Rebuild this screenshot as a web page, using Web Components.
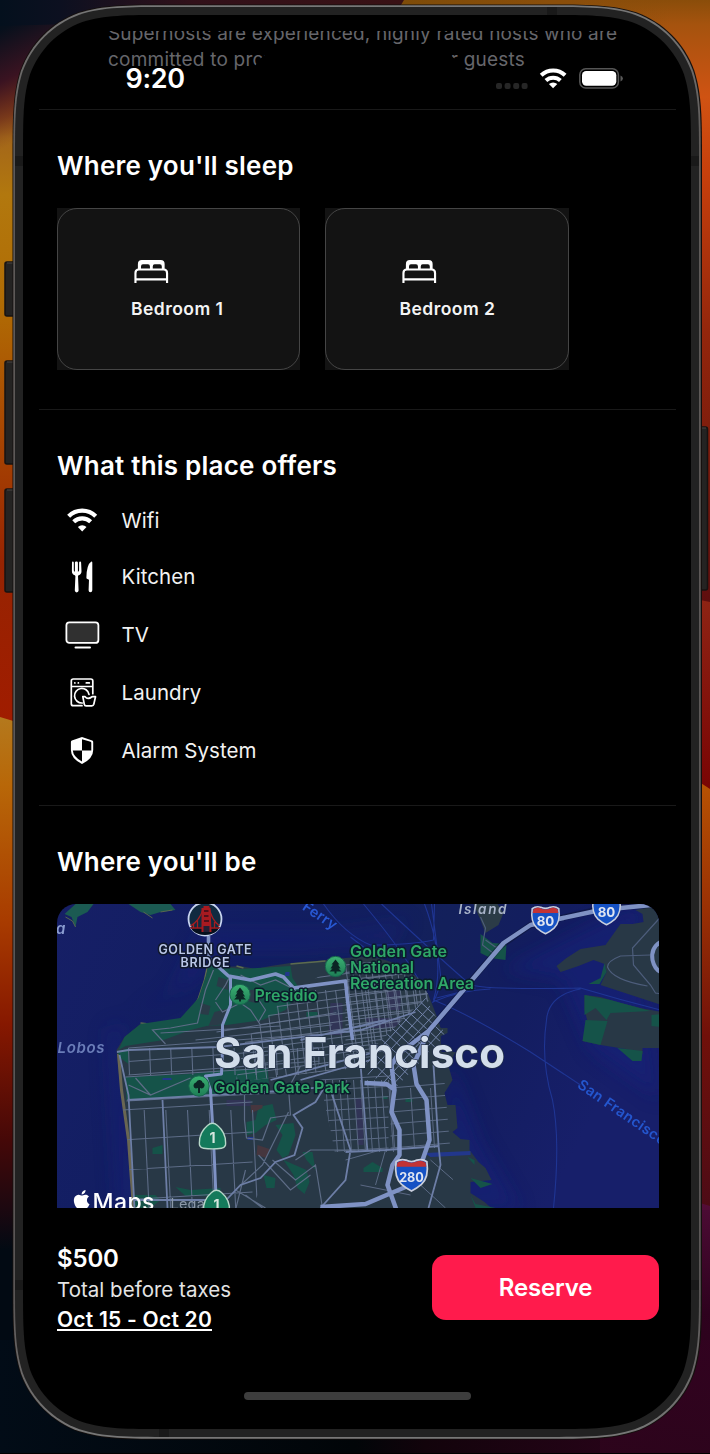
<!DOCTYPE html>
<html lang="en">
<head>
<meta charset="utf-8">
<title>Stay details</title>
<style>
html,body{margin:0;background:#000}
body{width:710px;height:1454px;overflow:hidden;font-family:Inter,"Liberation Sans",sans-serif;color:#fff}
</style>
</head>
<body>
<stay-page></stay-page>
<script>
const define = (name, html) => customElements.define(name, class extends HTMLElement {
  constructor() {
    super();
    const root = this.attachShadow({ mode: 'open' });
    const t = document.createElement('template');
    t.innerHTML = typeof html === 'function' ? html(this) : html;
    root.append(t.content.cloneNode(true));
  }
});

/* Rounded rectangle with continuous corners. */
function smoothRect(x, y, w, h, r) {
  const a = 1.52866 * r, b = 1.08849 * r, c = .86841 * r, d = .63149 * r, e = .07491 * r, f = .37282 * r, g = .16906 * r;
  const R = x + w, B = y + h;
  return `M${x+a} ${y}H${R-a}C${R-b} ${y} ${R-c} ${y} ${R-d} ${y+e}C${R-f} ${y+g} ${R-g} ${y+f} ${R-e} ${y+d}C${R} ${y+c} ${R} ${y+b} ${R} ${y+a}V${B-a}C${R} ${B-b} ${R} ${B-c} ${R-e} ${B-d}C${R-g} ${B-f} ${R-f} ${B-g} ${R-d} ${B-e}C${R-c} ${B} ${R-b} ${B} ${R-a} ${B}H${x+a}C${x+b} ${B} ${x+c} ${B} ${x+d} ${B-e}C${x+f} ${B-g} ${x+g} ${B-f} ${x+e} ${B-d}C${x} ${B-c} ${x} ${B-b} ${x} ${B-a}V${y+a}C${x} ${y+b} ${x} ${y+c} ${x+e} ${y+d}C${x+g} ${y+f} ${x+f} ${y+g} ${x+d} ${y+e}C${x+c} ${y} ${x+b} ${y} ${x+a} ${y}Z`;
}

define('device-frame', `
<style>
:host{display:block;position:relative;width:710px;height:1454px;box-sizing:border-box;padding:15px 19px 25px 23px}
svg{position:absolute;inset:0}
main{position:relative;display:flex;flex-direction:column;width:668px;height:1414px}
</style>
<svg width="710" height="1454" viewBox="0 0 710 1454">
<defs>
<linearGradient id="l1" x2="0" y2="1"><stop offset="0" stop-color="#04101d"/><stop offset=".06" stop-color="#0a1020"/><stop offset=".1" stop-color="#431526"/><stop offset=".135" stop-color="#75321a"/><stop offset=".19" stop-color="#a3661a"/><stop offset=".27" stop-color="#b2780e"/><stop offset=".42" stop-color="#b06c04"/><stop offset=".58" stop-color="#a94a02"/><stop offset=".78" stop-color="#972402"/><stop offset="1" stop-color="#a01c00"/></linearGradient>
<linearGradient id="l2" x2="0" y2="1"><stop offset="0" stop-color="#b4791d"/><stop offset=".1" stop-color="#b86708"/><stop offset=".3" stop-color="#a83b00"/><stop offset=".45" stop-color="#861800"/><stop offset=".62" stop-color="#450808"/><stop offset=".72" stop-color="#1c0810"/><stop offset=".78" stop-color="#020a13"/><stop offset="1" stop-color="#020a13"/></linearGradient>
<linearGradient id="r1" x2="0" y2="1"><stop offset="0" stop-color="#8a4d0a"/><stop offset=".04" stop-color="#a5530e"/><stop offset=".16" stop-color="#cf5313"/><stop offset=".28" stop-color="#c8400c"/><stop offset=".55" stop-color="#93260c"/><stop offset="1" stop-color="#5e0e0e"/></linearGradient>
<linearGradient id="r2" x2="0" y2="1"><stop offset="0" stop-color="#8e2414"/><stop offset="1" stop-color="#780303"/></linearGradient>
<linearGradient id="r3" x2="0" y2="1"><stop offset="0" stop-color="#b85403"/><stop offset=".3" stop-color="#9a3104"/><stop offset=".6" stop-color="#70100a"/><stop offset="1" stop-color="#4c0b16"/></linearGradient>
<linearGradient id="r4" x2="0" y2="1"><stop offset="0" stop-color="#560d3b"/><stop offset=".45" stop-color="#330221"/><stop offset="1" stop-color="#2d041c"/></linearGradient>
<linearGradient id="t" ><stop offset="0" stop-color="#04101d"/><stop offset=".14" stop-color="#0c1020"/><stop offset=".45" stop-color="#32111a"/><stop offset="1" stop-color="#3a1114"/></linearGradient>
<linearGradient id="tr"><stop offset="0" stop-color="#7c4b08"/><stop offset=".6" stop-color="#8a4e0a"/><stop offset="1" stop-color="#8a4e0a" stop-opacity="0"/></linearGradient>
<linearGradient id="b"><stop offset="0" stop-color="#020c17"/><stop offset=".5" stop-color="#010508"/><stop offset=".6" stop-color="#12030b"/><stop offset="1" stop-color="#30041e"/></linearGradient>
<linearGradient id="tl" gradientUnits="userSpaceOnUse" x1="0" y1="0" x2="60" y2="120"><stop offset="0" stop-color="#03101c"/><stop offset=".2" stop-color="#07101c"/><stop offset=".55" stop-color="#3a1321"/><stop offset=".8" stop-color="#6b2c1b" stop-opacity=".6"/><stop offset="1" stop-color="#8a4a1a" stop-opacity="0"/></linearGradient>
<linearGradient id="rim" x2="0" y2="1"><stop offset="0" stop-color="#777"/><stop offset=".1" stop-color="#5e5a58"/><stop offset=".9" stop-color="#5a5656"/><stop offset="1" stop-color="#777"/></linearGradient>
</defs>
<path fill="#000" d="M0 0H710V1454H0Z"/>
<path fill="url(#l1)" d="M0 0H355V722H0Z"/>
<path fill="url(#r1)" d="M355 0H710V605H355Z"/>
<path fill="url(#tl)" d="M0 0H130V150H0Z"/>
<path fill="url(#t)" d="M0 0H430C410 10 395 16 380 24H70L0 26Z"/>
<path fill="url(#tr)" d="M404 0H670V40H380Z"/>
<path fill="url(#l2)" d="M0 717L20 723V1400H0Z"/>
<path fill="url(#r2)" d="M690 598L710 602V800H690Z"/>
<path fill="url(#r3)" d="M690 776L710 789V1210H690Z"/>
<path fill="url(#b)" d="M0 1340H710V1454H0Z"/>
<path fill="url(#r4)" d="M600 1340L690 1200L710 1206V1454H600Z" opacity=".9"/>
<path d="M0 1453.500H710" stroke="#000"/>
<g fill="#242322" stroke="#171312" stroke-width="1.500"><rect x="5" y="262" width="14" height="54" rx="2"/><rect x="5" y="361" width="14" height="103" rx="2"/><rect x="5" y="489" width="14" height="103" rx="2"/><rect x="695" y="427" width="12.500" height="163" rx="2"/></g>
<path d="M7 263H14M7 362H14M7 490H14M700 428H706" stroke="#4b4744"/>
<path fill="#15100e" d="${smoothRect(12.500, 4.500, 689.500, 1435, 104)}"/>
<path fill="url(#rim)" d="${smoothRect(13.300, 5.200, 687.500, 1433.600, 103.500)}"/>
<path fill="#222" d="${smoothRect(15, 7, 684, 1430, 102)}"/>
<path fill="#191919" d="M15 156H23V166H15ZM691 156H699V166H691ZM15 1280H23V1290H15ZM691 1280H699V1290H691ZM547 7H557V15H547ZM159 1429H169V1437H159Z"/>
<path d="${smoothRect(23, 15, 668, 1414, 94)}"/>
</svg>
<main><slot></slot></main>`);

define('status-area', `
<style>
:host{display:block;position:relative;height:94px;flex:none}
.clip{margin:16px 0 0 85px;height:58px;overflow:hidden}
p{margin:-10px 0 0;font-size:19px;line-height:26px;color:#66666b;white-space:nowrap;letter-spacing:.14px}
#two{letter-spacing:.22px}
.island{position:absolute;left:229px;top:35px;width:211px;height:58px;border-radius:30px;background:#000}
.bar{position:absolute;left:102.500px;top:50px;right:68px;display:flex;align-items:center;height:28px}
b{font-weight:600;font-size:27px;line-height:28px;letter-spacing:-.35px}
svg{margin-left:auto}
</style>
<div class="clip"><p><span>Superhosts are experienced, highly rated hosts who are</span><br><span id="two">committed to providing great stays for guests</span></p></div>
<div class="island"></div>
<div class="bar"><b>9:20</b>
<svg width="128" height="26" viewBox="495 66 128 26">
<g fill="#262626"><rect x="496" y="83" width="6" height="6" rx="2"/><rect x="504.600" y="83" width="6" height="6" rx="2"/><rect x="513.200" y="83" width="6" height="6" rx="2"/><rect x="521.600" y="83" width="6" height="6" rx="2"/></g>
<g fill="none" stroke="#fff" stroke-width="4"><path d="M541.200 75.300a17.300 17.300 0 0 1 23.900 0"/><path d="M545.900 80.500a10.600 10.600 0 0 1 14.500 0"/></g><path fill="#fff" d="M553.100 88.300l-4.200-4.200a6.300 6.300 0 0 1 8.400 0z"/>
<rect x="579.800" y="68.800" width="38.600" height="19.200" rx="6" fill="none" stroke="#555" stroke-width="1.500"/><rect x="582" y="71" width="34.300" height="14.800" rx="4.200" fill="#fff"/><path fill="#5a5a5a" d="M620.500 75.500q2.400 1 2.400 3t-2.400 3z"/>
</svg></div>`);

define('rule-line', `<style>:host{display:block;height:1px;flex:none;margin:0 15px 0 16px;background:#191919}</style>`);

define('page-section', `
<style>
:host{display:block;flex:none;box-sizing:border-box;padding:0 32px 0 34px}
h2{margin:0;font-size:26px;line-height:32px;font-weight:600;letter-spacing:.22px;white-space:nowrap}
</style><h2><slot name="title"></slot></h2><slot></slot>`);

define('card-row', `<style>:host{display:flex;gap:25px;margin:26px 0 0 -.5px}</style><slot></slot>`);

define('bedroom-card', `
<style>
:host{display:block;width:243.500px;height:162px;background:#131313}
.box{box-sizing:border-box;height:100%;border:1px solid #454545;border-radius:20px;display:flex;flex-direction:column;padding:51px 0 0 73.500px;gap:14px}
svg{display:block;margin-left:2.500px}
span{font-weight:600;font-size:17.500px;line-height:22px;letter-spacing:.45px;color:#f4f4f4;white-space:nowrap}
</style>
<div class="box"><svg width="35" height="24" viewBox="0 0 36 24" preserveAspectRatio="none"><path fill="#fff" fill-rule="evenodd" d="M4 9V4q0-4 4-4h19.500q4 0 4 4v5H28.600V6.500q0-2.300-2-2.300h-5.300q-2 0-2 2.300V9H16.400V6.500q0-2.300-2-2.300H9.200q-2 0-2 2.300V9Z"/><path fill="none" stroke="#fff" stroke-width="2.200" d="M1.500 23V13q0-3.500 3.500-3.500H30.500q3.500 0 3.500 3.500V23M1.500 19.300H34"/></svg>
<span><slot></slot></span></div>`);

const ICONS = {
  wifi: '<g transform="translate(1.200 2.800) scale(.94)"><g fill="none" stroke="#fff" stroke-width="4.500"><path d="M2.600 11a20.500 20.500 0 0 1 28.800 0"/><path d="M8 17a13 13 0 0 1 18 0"/></g><path fill="#fff" d="M17 27.300l-4.600-4.700a6.700 6.700 0 0 1 9.200 0z"/></g>',
  kitchen: '<path fill="#fff" transform="translate(0 -.7)" d="M7.800 2.300q.9 0 1 1V11q.1 1.300 1.100 1.400V3.300q.1-1 1.200-1h.7q1 0 1.100 1v9.100q1.100-.1 1.200-1.400V3.300q.1-1 1-1t1 1l.4 8.700q0 3-2.900 4l-.6.700.6 14.600q-.1 1.800-1.900 1.800t-1.900-1.800l.6-14.600-.6-.7q-2.900-1-2.900-4l.1-8.700q0-1 .8-1zM26.300 2.300q1 0 1 1V31q-.1 2-1.900 2t-1.800-2L24 20.500l-2.100-1.100q-.6-.3-.5-1.200Q21.600 5.500 26.300 2.300z"/>',
  tv: '<g transform="translate(0 -.6)"><rect x="1.400" y="4.900" width="32" height="20.600" rx="3" fill="#303030" stroke="#fff" stroke-width="1.800"/><path d="M10.500 30H25" stroke="#fff" stroke-width="2" stroke-linecap="round"/></g>',
  laundry: '<g transform="translate(0 -.8)" fill="none" stroke="#fff" stroke-width="1.700" stroke-linejoin="round" stroke-linecap="round"><path d="M17 30.500H8.300q-2 0-2-2V5.800q0-2 2-2h17.500q2 0 2 2V18.500M6.500 11.300H27.500"/><path d="M24 19.200a7.300 7.300 0 1 0-6.800 8.600"/><path d="M17.800 21.500h2.300q2.500 3.300 7 0h3.400l-1.700 7.600q-.4 1.500-2 1.500h-5.700q-1.500 0-1.800-1.500z"/><path d="M9.800 7.700h.1M13.300 7.700h.1M21.300 7.700h3"/></g>',
  alarm: '<path fill="#fff" fill-rule="evenodd" transform="translate(-.3 -.6)" d="M17.300 3.500 27.500 7q1 .4 1 1.500v8q0 8.500-11.200 14Q6.200 25 6.200 16.500v-8q0-1.100 1-1.500ZM17.300 5.800V17.100H26.600V9.300q0-.7-.7-1ZM17.300 17.100H8.100Q8.600 23.300 17.300 28.200Z"/>'
};
define('amenity-row', el => `
<style>
:host{display:flex;align-items:center;height:58px;gap:21.500px;padding-left:8px}
svg{display:block;flex:none}
span{font-size:20.500px;line-height:28px;letter-spacing:.06px;font-weight:400;color:#f2f2f2;white-space:nowrap}
:host([icon=wifi]) span{padding-top:2px}
</style>
<svg width="35" height="35" viewBox="0 0 35 35">${ICONS[el.getAttribute('icon')]}</svg><span><slot></slot></span>`);

/* Evenly spaced parallel streets between two edges. */
function streets(x, y, w, h, nx, ny, dx, dy) {
  let d = '';
  for (let i = 0; i <= nx; i++) { const p = x + w * i / nx; d += `M${p.toFixed(1)} ${y}l${dx} ${h}`; }
  for (let i = 0; i <= ny; i++) { const p = y + h * i / ny; d += `M${x} ${p.toFixed(1)}l${w} ${dy}`; }
  return d;
}
const SF = 'M209 958L225 967L240 966L255 969L270 966L290 963L315 961L345 958L370 956L388 961L405 968L420 980L428 995L437 1018L440 1028H447V1033L440 1036L441 1052H455L448 1066L452 1080L444 1093L447 1105H455L457 1128L452 1132L460 1139L469 1140V1150L478 1162L485 1168L491 1180L470 1182L470 1193L484 1202L493 1210H132L127 1140L120 1090L116 1050L124 1037L140 1024L152 1023L163 1026L180 1018L190 1013L198 998L206 974Z';
const EAST = 'M661 905L635 910L642 914L643 922L632 924L620 924L605 945L580 949L566 958L556 966L560 972L578 966L593 960L604 964L606 972L600 985L661 1005Z';
const ALA = 'M584 995L600 997L620 1003L640 1008L661 1012V1048H642V1054L625 1049L600 1045L582 1041L588 1025L584 1010Z';
const shield = (x, y, n, s = 1) => `<g transform="translate(${x} ${y}) scale(${s})"><path fill="#1551c4" stroke="#c9cfdd" stroke-width="1.600" d="M-14-12Q-10-15-5-13.500Q0-11 5-13.500Q10-15 14-12Q16 2 9 8.500Q5 12 0 14.500Q-5 12-9 8.500Q-16 2-14-12Z"/><path fill="#c23335" d="M-12.800-11.400Q-9-14-5-12.500Q0-10 5-12.500Q9-14 12.800-11.400L13.500-7.500H-13.500Z"/><text y="6" text-anchor="middle" font-size="${n > 99 ? 11.500 : 14}" font-weight="700" fill="#dfe5f1">${n}</text></g>`;
const rt1 = (x, y) => `<g transform="translate(${x} ${y})"><path fill="#147a5b" stroke="#b7d8c9" stroke-width="1.400" d="M-13 9Q-14-3-5-10.500Q0-15 5-10.500Q14-3 13 9Q12 12 9 12.300Q0 13.500-9 12.300Q-12 12-13 9Z"/><text y="6.500" text-anchor="middle" font-size="14" font-weight="700" fill="#d7e7df">1</text></g>`;
const pin = (x, y, round) => `<g transform="translate(${x} ${y})"><circle r="10.200" fill="url(#pin)" stroke="#17644d"/><path fill="#0b2524" d="${round ? 'M-1 7V2Q-5 3.500-5.500 0Q-5.500-3-3-3.500Q-2-6.500 1-6Q3.500-5.500 3.500-3.500Q6-2.500 5.500 0Q4.500 3.500 1 2V7Z' : 'M0-7L4-2H2.500L5 2H3L6 5H1V7H-1V5H-6L-3 2H-5L-2.500-2H-4Z'}"/></g>`;

define('location-map', `
<style>:host{display:block;margin:26px 0 0 -.5px;height:304px;width:602.500px;border-radius:19px 19px 0 0;overflow:hidden}svg{display:block}
text{font-family:Inter,"Liberation Sans",sans-serif}
.g{fill:#2fa768;font-size:16px;font-weight:600;paint-order:stroke;stroke:#0b1d2c;stroke-width:3px;stroke-linejoin:round}
.w{fill:#bac7e8;font-weight:600;paint-order:stroke;stroke:#10182c;stroke-width:3px;stroke-linejoin:round}
</style>
<svg width="602.500" height="304" viewBox="56.500 904 602.500 304">
<defs>
<linearGradient id="sea" x2="1" y2=".25"><stop offset="0" stop-color="#161f66"/><stop offset=".35" stop-color="#121e62"/><stop offset=".62" stop-color="#13205b"/><stop offset=".8" stop-color="#131d60"/><stop offset="1" stop-color="#171f6a"/></linearGradient>
<linearGradient id="pin" x2="0" y2="1"><stop offset="0" stop-color="#3cb172"/><stop offset="1" stop-color="#1d7d55"/></linearGradient>
<clipPath id="land"><path d="${SF}"/></clipPath>
<clipPath id="west"><path d="M110 1020L340 1000L300 1120L250 1208H110Z"/></clipPath>
<clipPath id="north"><path d="M245 1040L290 992L345 962H440L425 1010L372 1066L235 1082Z"/></clipPath>
<clipPath id="soma"><path d="M425 998L445 1035L395 1088L362 1072L376 1045Z"/></clipPath>
<clipPath id="mission"><path d="M318 1075L360 1066L444 1082L455 1208H345L330 1130Z"/></clipPath>
<filter id="soft"><feGaussianBlur stdDeviation="9"/></filter>
</defs>
<path fill="url(#sea)" d="M56 904H660V1208H56Z"/>
<g filter="url(#soft)" fill="#18207a" opacity=".55"><path d="M120 1020L200 980L215 950L300 950L390 945L410 920L340 930L200 930L170 990L105 1030L115 1208H145L125 1080Z" opacity=".75"/><path d="M450 1060L480 1140L520 1210H440ZM590 1050L560 980L500 970L560 940L640 900V960L660 1100Z"/></g>
<g fill="none" stroke="#1f3593" stroke-width="1.100"><path d="M350 937Q400 975 425 1000M363 904Q410 960 428 998M381 904Q430 950 470 985Q490 990 580 988Q620 1000 660 1010M424 904Q445 960 433 1000M431 904Q437 950 440 975Q440 990 432 1003M323 904Q345 935 370 945Q410 945 433 940L434 904M432 1002Q460 990 490 989M433 1000Q470 1015 530 1052L580 1085M580 989Q548 995 546 1020Q540 1060 552 1100Q560 1140 553 1208M436 998Q460 992 475 988"/></g>
<path fill="#1b5a52" d="M64 914L75 904H93L87 912L77 917L75 927L71 917ZM128 904H170L175 910L160 912L150 915L140 912Z"/><path fill="none" stroke="#58674f" d="M65 917L72 921L75 927M143 912L152 918M160 912L172 910"/>
<path fill="#283846" d="${SF}${EAST}${ALA}"/>
<path fill="none" stroke="#696653" stroke-width="3" d="M118 1054L121 1090L128 1140L133 1208"/>
<path fill="none" stroke="#5d6b50" stroke-width="1.500" d="M207 966L204 980L198 998L190 1014M165 1026L140 1023M236 966L243 968M290 964L325 961"/>
<g fill="#155349"><path d="M209 958L225 967L240 969L290 966L292 978L300 990L285 1010L262 1020L226 1025L206 1026L190 1030L163 1040L125 1046L118 1050L124 1037L140 1024L180 1018L198 998L206 974Z"/><path d="M117 1052L128 1048V1064L120 1058ZM125 1077L190 1074L220 1070L267 1068L269 1091L190 1096L126 1100Z"/><path d="M258 1107L272 1104L276 1120L265 1125L255 1133L246 1135V1122L255 1120ZM275 1125L293 1123L295 1135L288 1155L282 1158L276 1150L282 1135ZM283 1160L306 1170L309 1182L304 1194L297 1188L293 1175ZM302 1152L312 1152L315 1170L306 1160ZM263 1175L275 1178L274 1188L266 1188ZM175 1187L190 1190L220 1188V1196L185 1196ZM152 1148L162 1145L162 1154L152 1154ZM133 1195H155L160 1200L150 1208H135ZM363 1168L372 1162L382 1168L382 1172L363 1172Z"/><path d="M480 934L492 943L506 944L505 960L490 958L480 953ZM584 995L610 1000L650 1011L610 1013L606 1020L595 1008L584 1015ZM585 1020L607 1021L600 1045L582 1041ZM604 963L606 972L599 984L588 984L600 978ZM651 1015L661 1014V1027L651 1026ZM617 1048L642 1051L641 1061H632ZM467 1157L474 1160V1165ZM470 1178L492 1184L480 1188ZM470 1195L475 1204L495 1208H475ZM382 1096H387V1099H382ZM405 1098H412V1102H405ZM306 1012H317V1017H306ZM333 1010H341V1015H333Z"/></g>
<path fill="#2a3b48" d="M214 1012L226 1009L224 1024L208 1026ZM200 1003L210 1006L208 1015L200 1014ZM240 992L262 988L266 996L255 1003L240 999ZM218 977L228 980L228 990L216 986Z"/>
<path fill="#2b3b47" d="M473 904H497L503 913L498 925L485 933L480 920Z"/>
<path fill="#46363e" d="M257 1145L269 1149L266 1158L256 1155ZM250 1105H262V1108L251 1113Z"/>
<path fill="#33335a" opacity=".8" d="M226 1100H250V1106H226ZM330 1003H342V1035H328ZM355 1098H363V1145H357ZM365 1018H400V1028H368ZM385 985H400V1010H388Z"/>
<path fill="#22378c" d="M162 1078H171V1080H162ZM247 1137H253V1140H247ZM285 972H289V976H284ZM424 1153L470 1151V1155L430 1157Z"/>
<g clip-path="url(#land)" fill="none">
<g clip-path="url(#west)" stroke="#5d6c87" stroke-width="1.100"><path d="${streets(128, 1048, 190, 27, 9, 2, 1, -14)}${streets(122, 1110, 130, 120, 6, 4, 6, -8)}M126 1101L330 1090M125 1077L270 1068M216 1032L340 1012M195 1040L340 1024M160 1033L280 1026"/></g>
<g clip-path="url(#north)" stroke="#66758f" stroke-width=".9"><path d="${streets(225, 990, 220, 110, 22, 14, 14, -30)}${streets(345, 965, 90, 90, 14, 12, 12, -10)}"/></g>
<g clip-path="url(#soma)" stroke="#7384aa" stroke-width="1"><path fill="#283846" stroke="none" d="M340 980H460V1090H340Z"/><path d="${Array.from({length:13},(_,i)=>`M${350+i*7} ${1042+i*-4}l60 56`).join('')}${Array.from({length:12},(_,i)=>`M${360+i*6} ${1070+i*6}l80-88`).join('')}"/></g>
<g clip-path="url(#mission)" stroke="#5a6983" stroke-width="1"><path d="${streets(318, 1080, 70, 72, 10, 7, 5, -4)}${streets(390, 1088, 60, 60, 3, 5, 4, -5)}M345 1160L380 1150M360 1185L410 1195M385 1150L375 1185M420 1185L445 1208M430 1160L462 1188L460 1208"/></g>
<g stroke="#5d6c86" stroke-width="1.200"><path d="M213 970L205 990L200 1010L197 1023L170 1028L152 1030L165 1044M215 1000L225 985L230 975M215 1002L222 1012L240 1003L250 1010L260 1025M240 975L260 985L275 980L295 990M258 1022L265 1010L255 995M128 1085L150 1095L190 1078M135 1078L150 1095M300 1066L288 1088L290 1115L270 1118L262 1140L246 1138L244 1120L244 1095M288 1112L262 1165L235 1190L265 1208M258 1155L290 1190L310 1175M245 1170L235 1210M245 1195L262 1208M272 1160L295 1180L315 1165L322 1208M295 1160L310 1150L355 1150"/></g>
<g stroke="#6d7ea6" stroke-width="1.800"><path d="M116 1052L128 1050L218 1047L360 1030L415 1012M162 1100L167 1208M127 1100L280 1091L324 1087M119 1055L128 1095L134 1208M300 1080L335 1070L370 1060M324 1087L315 1102L293 1115L302 1128L294 1155L275 1162L260 1178L240 1185L220 1206M360 1064L367 1152M325 1085L330 1090L350 1150L345 1180L320 1208M345 1152L385 1150L439 1146M433 1065L438 1145L440 1165L428 1208M270 1080L390 1048M300 1040L385 1020M134 1200H215"/></g>
</g>
<g fill="none" stroke="#4d5d7b" stroke-width="1.200"><path d="M661 916L632 948L633 965L650 985L655 993L661 994M650 955L620 956Q607 961 607 967Q612 980 647 986M480 917L485 928L482 945L495 955M485 940L495 947L505 945"/></g>
<g fill="none" stroke="#0b1430" stroke-width="6" opacity=".5"><path d="M400 1052L428 1031L500 946L530 925L600 909L661 904"/></g>
<g fill="none" stroke="#7f92c4" stroke-linejoin="round"><path stroke-width="3.600" d="M208 936V958L228 976L250 980L275 974L283 977L293 988L345 981L347 1000L352 1040"/><path stroke-width="3" d="M230 976V1005L222 1025V1050L221 1074L205 1076L210 1090L213 1140L216 1208"/><path stroke-width="4.500" d="M398 1054L428 1031L503 943L530 925L600 910L661 904M398 1054L391 1065L394 1090L391 1112L399 1130V1155L392 1165L387 1185L396 1210M364 1083L386 1084L393 1089M428 1031L413 1065L416 1084L426 1100L429 1140L421 1163M320 1207L365 1204L405 1187"/><path stroke-width="4" d="M660 942Q650 948 652 960Q654 969 660 972"/></g>
<g><circle cx="204.500" cy="919" r="16.500" fill="#102a40" stroke="#c7d3ee" stroke-width="1.800"/><path fill="#06101e" d="M189.500 927H219.500Q215 935 204.500 935T189.500 927Z"/><path fill="none" stroke="#a51d20" stroke-width="1.300" d="M190 926Q199 921 203 908M219 926Q211 920 208 906M190 928H219M193 924V928M197 920V928M214 922V928"/><path fill="#a81a20" d="M201 908H203V906H208V908H210L211 932H201Z"/><path stroke="#350d18" stroke-width="1.600" d="M203.500 911H208M203.500 916H208M203.500 921H208.500"/><path d="M203 926H209V932H203Z" fill="#221f35"/></g>
<g class="w"><text x="158" y="953.500" font-size="12.500" textLength="93">GOLDEN GATE</text><text x="180" y="966.500" font-size="12.500" textLength="49">BRIDGE</text></g>
<g fill="#8a9cd0" font-weight="600" font-style="italic" font-size="15"><text x="57" y="1052.500" textLength="47" fill="#6a7db8">Lobos</text><text x="55.500" y="933.500">a</text><text x="458" y="913.500" font-size="13.500" fill="#a8b3c9" textLength="48">Island</text></g>
<text transform="translate(301 909) rotate(34)" font-size="14.500" font-weight="600" fill="#2858d4" textLength="38">Ferry</text>
<text transform="translate(576 1087) rotate(34.500)" font-size="14.500" font-weight="600" fill="#2456ce" textLength="104">San Francisco</text>
${shield(545,920,80,.95)}${shield(606,911,80,.95)}${shield(411,1175,280,1.1)}
${rt1(212,1136)}
${pin(239.500,994.500)}${pin(335,966.500)}${pin(198.500,1086,true)}
<g class="g"><text x="254" y="1001" textLength="63">Presidio</text><text x="349.500" y="956.500" textLength="97">Golden Gate</text><text x="349.500" y="973" textLength="64">National</text><text x="349.500" y="989" textLength="124">Recreation Area</text><text x="213" y="1092.500" textLength="136">Golden Gate Park</text></g>
<text x="213.500" y="1068" font-size="42" font-weight="700" fill="#d3deeb" paint-order="stroke" stroke="#25324a" stroke-width="1.500" textLength="291">San Francisco</text>
<path fill="#fff" transform="translate(71.600 1190) scale(.8)" d="M12.152 6.896c-.948 0-2.415-1.078-3.960-1.040-2.040.027-3.910 1.183-4.961 3.014-2.117 3.675-.546 9.103 1.519 12.090 1.013 1.454 2.208 3.090 3.792 3.039 1.520-.065 2.090-.987 3.935-.987 1.831 0 2.350.987 3.960.948 1.637-.026 2.676-1.480 3.676-2.948 1.156-1.688 1.636-3.325 1.662-3.415-.039-.013-3.182-1.221-3.220-4.857-.026-3.040 2.480-4.494 2.597-4.559-1.429-2.090-3.623-2.324-4.390-2.376-2-.156-3.675 1.090-4.610 1.090zM15.530 3.830c.843-1.012 1.400-2.427 1.245-3.830-1.207.052-2.662.805-3.532 1.818-.780.896-1.454 2.338-1.273 3.714 1.338.104 2.715-.688 3.559-1.701z"/>
<text x="92" y="1209.500" font-size="23" font-weight="500" fill="#fff" textLength="62">Maps</text>
<text x="170" y="1208.500" font-size="14.500" fill="#8b98a8" textLength="38">Legal</text>
${rt1(216,1203)}
</svg>`);

define('booking-bar', `
<style>
:host{display:flex;flex:none;justify-content:space-between;margin:34px 32px 0 34px;height:92px}
.info{display:flex;flex-direction:column;align-items:flex-start;white-space:nowrap;padding-top:1px}
b{font-weight:600;font-size:24px;line-height:32px;letter-spacing:-.15px}
span{font-size:20.500px;line-height:30px;color:#e4e4e4;letter-spacing:.02px}
u{text-decoration:none;border-bottom:2px solid #fff;font-weight:600;font-size:21px;line-height:23px;height:21.500px;margin-top:2.500px;letter-spacing:.23px}
button{margin:13px 0 0;width:227px;height:65px;border:0;border-radius:14px;background:#ff1b4c;color:#fff;font:600 24px Inter,"Liberation Sans",sans-serif;letter-spacing:-.15px;padding:0}
</style>
<div class="info"><b>$500</b><span>Total before taxes</span><u>Oct 15 - Oct 20</u></div><button>Reserve</button>`);

define('home-indicator', `<style>:host{display:block;width:227px;height:8px;border-radius:4px;background:#3d3d3d;margin:auto 0 29px 221px}</style>`);

define('stay-page', `
<style>
:host{display:block}
.s1{height:299px;padding-top:40px}
.s2{height:395px;padding-top:40px}
.s3{height:402px;padding-top:40px}
.list{display:flex;flex-direction:column;padding-top:10px}
</style>
<device-frame>
<status-area></status-area>
<rule-line></rule-line>
<page-section class="s1"><span slot="title">Where you'll sleep</span><card-row><bedroom-card>Bedroom 1</bedroom-card><bedroom-card>Bedroom 2</bedroom-card></card-row></page-section>
<rule-line></rule-line>
<page-section class="s2"><span slot="title">What this place offers</span><div class="list"><amenity-row icon="wifi" style="height:56px">Wifi</amenity-row><amenity-row icon="kitchen">Kitchen</amenity-row><amenity-row icon="tv">TV</amenity-row><amenity-row icon="laundry">Laundry</amenity-row><amenity-row icon="alarm">Alarm System</amenity-row></div></page-section>
<rule-line></rule-line>
<page-section class="s3"><span slot="title">Where you'll be</span><location-map></location-map></page-section>
<booking-bar></booking-bar>
<home-indicator></home-indicator>
</device-frame>`);
</script>
</body>
</html>
